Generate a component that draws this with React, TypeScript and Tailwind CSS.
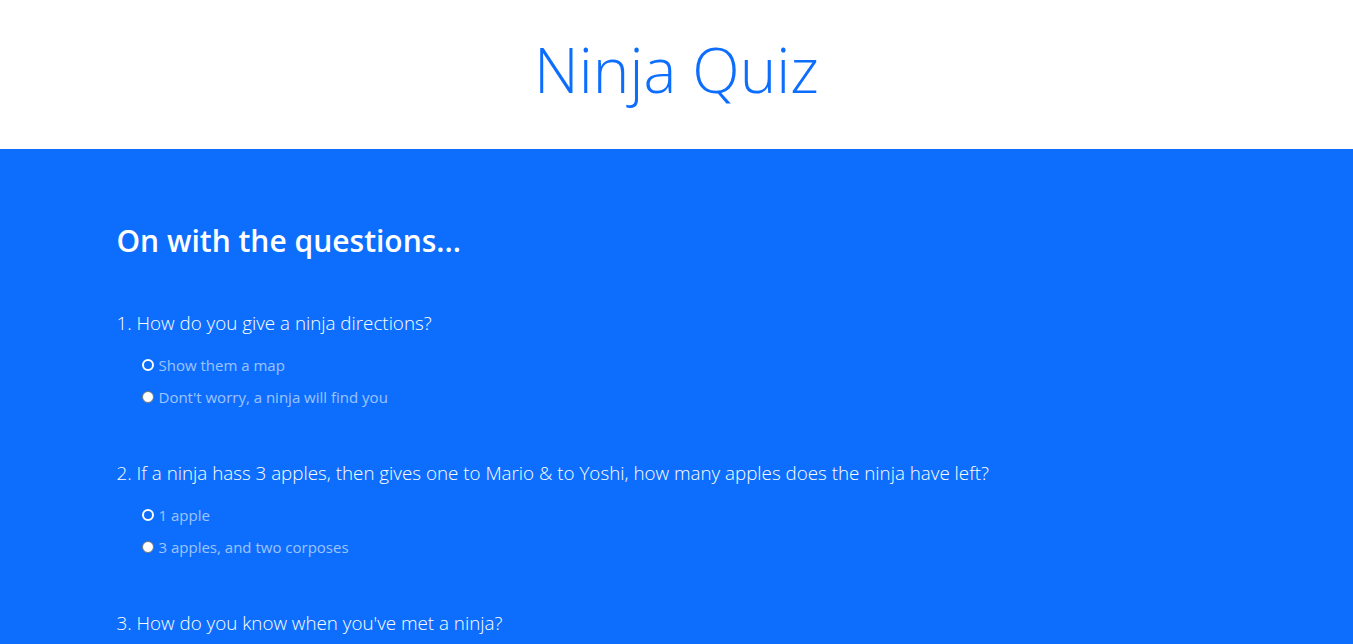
const questions = [
  {
    q: "1. How do you give a ninja directions?",
    options: ["Show them a map", "Dont't worry, a ninja will find you"],
  },
  {
    q: "2. If a ninja hass 3 apples, then gives one to Mario & to Yoshi, how many apples does the ninja have left?",
    options: ["1 apple", "3 apples, and two corposes"],
  },
  {
    q: "3. How do you know when you've met a ninja?",
    options: ["You'll see them coming", "You won't, they'll sneak up on you"],
  },
];

function Radio({ focused }: { focused: boolean }) {
  return focused ? (
    <span className="inline-block w-[12px] h-[12px] rounded-full border-2 border-white bg-[#0d6efd] shrink-0" />
  ) : (
    <span className="inline-block w-[12px] h-[12px] rounded-full border border-[#767676] bg-white shrink-0" />
  );
}

export default function App() {
  return (
    <div className="min-h-screen font-['Open_Sans',sans-serif]">
      {/* Header */}
      <header className="h-[149px] pb-[11px] bg-white flex items-center justify-center">
        <h1 className="text-[62px] font-light text-[#0d6efd] leading-none">Ninja Quiz</h1>
      </header>

      {/* Quiz */}
      <section className="bg-[#0d6efd] pt-[74px] pb-[60px]">
        <div className="max-w-[1144px] mx-auto px-3 text-white">
          <h2 className="text-[30px] font-semibold leading-[1.2] mb-[50px]">On with the questions...</h2>
          {questions.map((item, i) => (
            <div key={i} className="mb-[50px]">
              <p className="text-[18.8px] font-light leading-[1.5] mb-[16px]">{item.q}</p>
              <div className="pl-[25px] flex flex-col gap-[8px]">
                {item.options.map((opt, j) => (
                  <label key={j} className="flex items-center gap-[5px] text-[15px] text-white/60 leading-[24px]">
                    <Radio focused={j === 0} />
                    {opt}
                  </label>
                ))}
              </div>
            </div>
          ))}
        </div>
      </section>
    </div>
  );
}
